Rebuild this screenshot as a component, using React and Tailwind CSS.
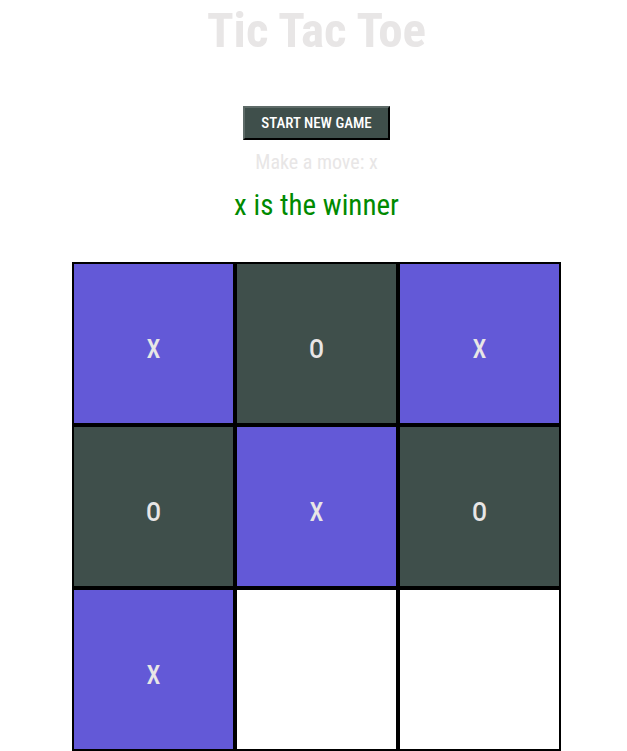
import React from 'react';

const board = ['X', 'O', 'X', 'O', 'X', 'O', 'X', null, null];

function Cell({ value }) {
  const bg = value === 'X' ? 'bg-[#6359d7]' : value === 'O' ? 'bg-[#3f4f4b]' : 'bg-white';
  return (
    <div className={`${bg} border-2 border-black w-[163px] h-[163px] flex items-center justify-center pt-[12px] text-[25px] font-medium text-[#e8e6e6]`}>
      {value}
    </div>
  );
}

export default function App() {
  return (
    <div className="min-h-screen bg-white flex flex-col items-center pl-[6px] font-['Roboto_Condensed','Roboto',sans-serif] [font-stretch:condensed]">
      <h1 className="text-[49px] font-bold leading-none mt-[6px] text-[#e8e6e6]">Tic Tac Toe</h1>
      <button className="mt-[51px] w-[147px] h-[34px] bg-[#3f4f4b] text-white text-[15px] font-medium uppercase border-2 border-t-[#5e6b68] border-l-[#5e6b68] border-r-black border-b-black">
        Start new game
      </button>
      <p className="mt-[10px] text-[20px] leading-[24px] text-[#e8e6e6]">Make a move: x</p>
      <p className="mt-[13px] text-[29px] leading-[36px] text-[#008a00]">x is the winner</p>
      <div className="mt-[39px] grid grid-cols-3">
        {board.map((v, i) => (
          <Cell key={i} value={v} />
        ))}
      </div>
    </div>
  );
}
